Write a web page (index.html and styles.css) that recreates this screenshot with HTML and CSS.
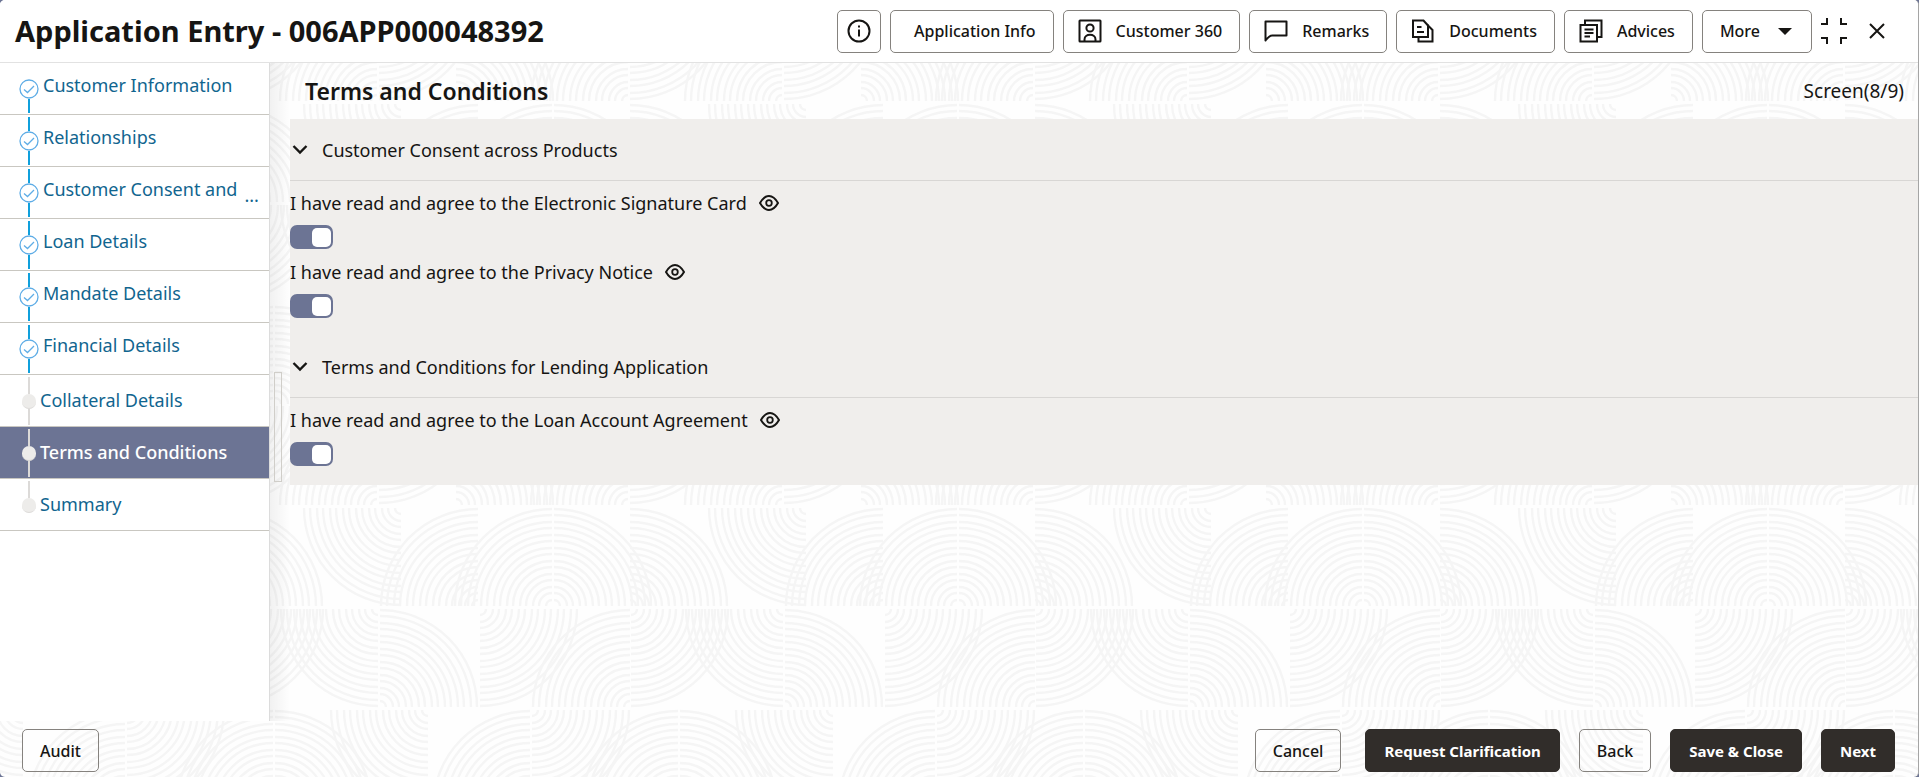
FILE: index.html
```html
<!DOCTYPE html>
<html lang="en">
<head>
  <meta charset="UTF-8" />
  <meta name="viewport" content="width=device-width, initial-scale=1.0" />
  <title>Application Entry</title>
  <link rel="stylesheet" href="styles.css">
</head>
<body>
<div class="window">

  <!-- background pattern: rows of quarter fans -->
  <svg class="backdrop" aria-hidden="true">
    <defs>
      <path id="fan" d="M97 0A97 97 0 0 1 0 97M91 0A91 91 0 0 1 0 91M84 0A84 84 0 0 1 0 84M78 0A78 78 0 0 1 0 78M71 0A71 71 0 0 1 0 71M65 0A65 65 0 0 1 0 65M58 0A58 58 0 0 1 0 58M52 0A52 52 0 0 1 0 52M45 0A45 45 0 0 1 0 45M39 0A39 39 0 0 1 0 39M32 0A32 32 0 0 1 0 32M26 0A26 26 0 0 1 0 26M19 0A19 19 0 0 1 0 19M13 0A13 13 0 0 1 0 13M6 0A6 6 0 0 1 0 6" />
      <pattern id="waves" x="0" y="1" width="405" height="404" patternUnits="userSpaceOnUse">
        <g fill="none" stroke="#f5f5f5" stroke-width="2.4">
          <!-- row 1 -->
          <use href="#fan" transform="translate(377 100) scale(-1 -1)" />
          <use href="#fan" transform="translate(379 1)" />
          <use href="#fan" transform="translate(-26 1)" />
          <use href="#fan" transform="translate(51 100) scale(1 -1)" />
          <use href="#fan" transform="translate(223 100) scale(-1 -1)" />
          <use href="#fan" transform="translate(225 1)" />
          <!-- row 2 -->
          <use href="#fan" transform="translate(401 103) scale(-1 1)" />
          <use href="#fan" transform="translate(73 201) scale(-1 -1)" />
          <use href="#fan" transform="translate(478 201) scale(-1 -1)" />
          <use href="#fan" transform="translate(147 201) scale(-1 -1)" />
          <use href="#fan" transform="translate(149 201) scale(1 -1)" />
          <use href="#fan" transform="translate(225 201) scale(1 -1)" />
          <!-- row 3 -->
          <use href="#fan" transform="translate(378 204) scale(-1 1)" />
          <use href="#fan" transform="translate(226 204)" />
          <use href="#fan" transform="translate(380 302) scale(1 -1)" />
          <use href="#fan" transform="translate(-25 302) scale(1 -1)" />
          <use href="#fan" transform="translate(75 204)" />
          <use href="#fan" transform="translate(225 302) scale(-1 -1)" />
          <!-- row 4 -->
          <use href="#fan" transform="translate(23 305) scale(-1 1)" />
          <use href="#fan" transform="translate(428 305) scale(-1 1)" />
          <use href="#fan" transform="translate(125 403) scale(-1 -1)" />
          <use href="#fan" transform="translate(127 305)" />
          <use href="#fan" transform="translate(273 403) scale(-1 -1)" />
          <use href="#fan" transform="translate(275 403) scale(1 -1)" />
        </g>
      </pattern>
      <symbol id="eye" viewBox="0 0 20 16">
        <path d="M1 8Q5 1 10 1T19 8Q15 15 10 15T1 8Z" fill="none" stroke="currentColor" stroke-width="2" stroke-linejoin="round" />
        <circle cx="10" cy="8" r="2.8" fill="none" stroke="currentColor" stroke-width="1.8" />
      </symbol>
      <symbol id="chevron" viewBox="0 0 16 10">
        <path d="M1.5 1L8 7.5L14.5 1" fill="none" stroke="currentColor" stroke-width="2.4" />
      </symbol>
      <symbol id="done" viewBox="0 0 20 20">
        <circle cx="10" cy="10" r="9" fill="#fff" stroke="#5fade6" stroke-width="1.3" />
        <path d="M5 10.5L8.5 13.5L15 7" fill="none" stroke="#5fade6" stroke-width="1.3" />
      </symbol>
    </defs>
    <rect width="100%" height="100%" fill="url(#waves)" />
  </svg>

  <header class="header">
    <h1>Application Entry - 006APP000048392</h1>
    <div class="toolbar">
      <button class="btn btn-icon" aria-label="Information">
        <svg width="24" height="24" viewBox="0 0 24 24" fill="none" stroke="currentColor" stroke-width="2">
          <circle cx="12" cy="12" r="10.5" />
          <path d="M12 10.5V17.5" />
          <path d="M12 6.5V8.5" />
        </svg>
      </button>
      <button class="btn btn-info">Application Info</button>
      <button class="btn btn-tool">
        <svg width="24" height="24" viewBox="0 0 24 24" fill="none" stroke="currentColor" stroke-width="2">
          <rect x="1.5" y="1.5" width="21" height="21" rx="0.5" />
          <circle cx="12" cy="9" r="3.6" />
          <path d="M6.5 22V20.5C6.5 17.5 9 15.8 12 15.8S17.5 17.5 17.5 20.5V22" />
        </svg>
        Customer 360
      </button>
      <button class="btn btn-tool">
        <svg width="24" height="24" viewBox="0 0 24 24" fill="none" stroke="currentColor" stroke-width="2" stroke-linejoin="round">
          <path d="M1.5 2.5H22.5V16.5H8C5.5 16.5 4 18.5 1.5 21.5Z" />
        </svg>
        Remarks
      </button>
      <button class="btn btn-tool">
        <svg width="24" height="24" viewBox="0 0 24 24" fill="none" stroke="currentColor" stroke-width="2">
          <path d="M2 1.5H12.5L17 6.5V18H2Z" />
          <path d="M16.5 6L21.5 11V22.5H7.5V18" />
          <path d="M6 8H10.5M6 13H13" />
        </svg>
        Documents
      </button>
      <button class="btn btn-tool">
        <svg width="24" height="24" viewBox="0 0 24 24" fill="none" stroke="currentColor" stroke-width="2">
          <path d="M1.5 6H18V22.5H1.5Z" />
          <path d="M6 6V1.5H22.5V18H18" />
          <path d="M5.5 10.5H14.5M5.5 14H14.5M5.5 17.5H11" />
        </svg>
        Advices
      </button>
      <button class="btn btn-more">
        More
        <svg width="14" height="7" viewBox="0 0 14 7"><path d="M0 0H14L7 7Z" fill="currentColor" /></svg>
      </button>
      <button class="btn-plain" aria-label="Exit full screen">
        <svg width="26" height="26" viewBox="0 0 26 26" fill="none" stroke="currentColor" stroke-width="2">
          <path d="M6 0V6H0M20 0V6H26M0 20H6V26M26 20H20V26" />
        </svg>
      </button>
      <button class="btn-plain btn-close" aria-label="Close">
        <svg width="16" height="16" viewBox="0 0 16 16" fill="none" stroke="currentColor" stroke-width="2">
          <path d="M1 1L15 15M15 1L1 15" />
        </svg>
      </button>
    </div>
  </header>

  <div class="main">
    <nav class="sidebar">
      <ol class="steps">
        <li class="step done"><a href="#"><span class="marker"><svg><use href="#done" /></svg></span><span class="label">Customer Information</span></a></li>
        <li class="step done"><a href="#"><span class="marker"><svg><use href="#done" /></svg></span><span class="label">Relationships</span></a></li>
        <li class="step done"><a href="#"><span class="marker"><svg><use href="#done" /></svg></span><span class="label">Customer Consent and</span><span class="more">...</span></a></li>
        <li class="step done"><a href="#"><span class="marker"><svg><use href="#done" /></svg></span><span class="label">Loan Details</span></a></li>
        <li class="step done"><a href="#"><span class="marker"><svg><use href="#done" /></svg></span><span class="label">Mandate Details</span></a></li>
        <li class="step done"><a href="#"><span class="marker"><svg><use href="#done" /></svg></span><span class="label">Financial Details</span></a></li>
        <li class="step"><a href="#"><span class="marker"><i class="dot"></i></span><span class="label">Collateral Details</span></a></li>
        <li class="step active"><a href="#" aria-current="step"><span class="marker"><i class="dot"></i></span><span class="label">Terms and Conditions</span></a></li>
        <li class="step"><a href="#"><span class="marker"><i class="dot"></i></span><span class="label">Summary</span></a></li>
      </ol>
    </nav>
    <div class="gutter"><div class="handle"></div></div>

    <main class="content">
      <div class="content-head">
        <h2>Terms and Conditions</h2>
        <span class="screen-no">Screen(8/9)</span>
      </div>
      <div class="panel">
        <details open>
          <summary><svg class="chevron"><use href="#chevron" /></svg>Customer Consent across Products</summary>
          <div class="consent">
            <div class="consent-text">
              <label for="signature">I have read and agree to the Electronic Signature Card</label>
              <button class="btn-plain" aria-label="View signature card"><svg class="eye"><use href="#eye" /></svg></button>
            </div>
            <input class="switch" type="checkbox" id="signature" checked>
          </div>
          <div class="consent">
            <div class="consent-text">
              <label for="privacy">I have read and agree to the Privacy Notice</label>
              <button class="btn-plain" aria-label="View privacy notice"><svg class="eye"><use href="#eye" /></svg></button>
            </div>
            <input class="switch" type="checkbox" id="privacy" checked>
          </div>
        </details>
        <details open>
          <summary><svg class="chevron"><use href="#chevron" /></svg>Terms and Conditions for Lending Application</summary>
          <div class="consent">
            <div class="consent-text">
              <label for="loan">I have read and agree to the Loan Account Agreement</label>
              <button class="btn-plain" aria-label="View loan agreement"><svg class="eye"><use href="#eye" /></svg></button>
            </div>
            <input class="switch" type="checkbox" id="loan" checked>
          </div>
        </details>
      </div>
    </main>
  </div>

  <footer class="footer">
    <button class="btn">Audit</button>
    <div class="actions">
      <button class="btn btn-cancel">Cancel</button>
      <button class="btn btn-dark">Request Clarification</button>
      <button class="btn">Back</button>
      <button class="btn btn-dark">Save &amp; Close</button>
      <button class="btn btn-dark">Next</button>
    </div>
  </footer>
</div>
</body>
</html>
```
FILE: styles.css
```css
:root {
  --text: #161513;
  --link: #11658f;
  --accent: #6c7494;
  --dark: #312d2a;
  --panel: #f0eeec;
  --line: #c9c7c1;
  --blue: #10a0dc;
}

* {
  box-sizing: border-box;
  margin: 0;
  padding: 0;
}

body {
  background: var(--accent);
  color: var(--text);
  font-family: "Noto Sans", "Open Sans", sans-serif;
  font-size: 18px;
  line-height: 24px;
}

button {
  font-family: inherit;
  color: inherit;
  cursor: pointer;
}

.window {
  position: relative;
  isolation: isolate;
  display: flex;
  flex-direction: column;
  min-height: 100vh;
  background: #fefefe;
  border-right: 1px solid #a5a5a5;
  border-radius: 5px;
  overflow: hidden;
}

.backdrop {
  position: absolute;
  inset: 0;
  width: 100%;
  height: 100%;
  z-index: -1;
}

/* header */
.header {
  display: flex;
  align-items: center;
  justify-content: space-between;
  height: 63px;
  padding: 0 33px 0 15px;
  background: #fff;
  border-bottom: 1px solid #e2e2e2;
}

.header h1 {
  font-size: 29px;
  font-weight: 700;
  line-height: 40px;
}

.toolbar {
  display: flex;
  align-items: center;
  gap: 9px;
}

.btn {
  display: flex;
  align-items: center;
  height: 43px;
  padding: 0 17px;
  background: transparent;
  border: 1px solid #85827e;
  border-radius: 5px;
  font-size: 16px;
  font-weight: 500;
  white-space: nowrap;
}

.btn-icon {
  padding: 0 9px;
}

.btn-info {
  padding: 0 17px 0 23px;
}

.btn-tool {
  gap: 14px;
  padding: 0 17px 0 14px;
}

.btn-more {
  gap: 18px;
  padding: 0 19px 0 17px;
}

.btn-plain {
  display: flex;
  background: none;
  border: none;
}

.btn-close {
  margin-left: 13px;
}

/* left steps */
.main {
  display: flex;
  flex: 1;
}

.sidebar {
  flex: 0 0 270px;
  background: #fff;
  border-right: 1px solid #dcdcdc;
}

.steps {
  list-style: none;
}

.step a {
  display: flex;
  align-items: center;
  height: 52px;
  padding-left: 19px;
  border-bottom: 1px solid var(--line);
  color: var(--link);
  text-decoration: none;
  white-space: nowrap;
}

.marker {
  display: flex;
  flex-direction: column;
  align-items: center;
  align-self: stretch;
  width: 20px;
  margin-right: 1px;
  padding: 2px 0 1px;
}

.marker::before,
.marker::after {
  content: "";
  flex: 1;
  width: 2px;
  background: #dcdad8;
}

.marker svg {
  display: block;
  width: 20px;
  height: 20px;
}

.done .marker {
  margin-right: 4px;
}

.done .marker::before,
.done .marker::after {
  background: var(--blue);
}

.step:first-child .marker::before,
.step:last-child .marker::after {
  visibility: hidden;
}

.dot {
  width: 14px;
  height: 15px;
  border-radius: 7px;
  background: #edecea;
  border-bottom: 1px solid #dcdad8;
}

.label {
  padding-bottom: 2px;
}

.done .label {
  padding-bottom: 8px;
}

.more {
  align-self: flex-end;
  margin-left: 7px;
  padding-bottom: 11px;
}

.active a {
  background: var(--accent);
  color: #fff;
  font-weight: 500;
}

.gutter {
  flex: 0 0 20px;
  padding: 309px 0 0 4px;
  background: linear-gradient(to right, rgba(0, 0, 0, 0.05), transparent);
}

.handle {
  width: 8px;
  height: 110px;
  border: 1px solid #d0cec9;
}

/* content */
.content {
  flex: 1;
  min-width: 0;
}

.content-head {
  display: flex;
  align-items: center;
  justify-content: space-between;
  height: 56px;
  padding: 0 14px 0 15px;
}

.content-head h2 {
  font-size: 23px;
  font-weight: 600;
  line-height: 32px;
}

.screen-no {
  font-size: 19px;
}

.panel {
  background: var(--panel);
  padding-bottom: 1px;
}

details {
  padding-bottom: 17px;
}

summary {
  display: flex;
  align-items: center;
  gap: 14px;
  height: 62px;
  padding-left: 2px;
  border-bottom: 1px solid #d8d6d4;
  cursor: pointer;
}

.chevron {
  width: 16px;
  height: 10px;
}

.consent {
  padding-bottom: 1px;
}

.consent-text {
  display: flex;
  align-items: center;
  gap: 12px;
  height: 44px;
}

.eye {
  width: 20px;
  height: 16px;
}

.switch {
  display: flex;
  justify-content: flex-start;
  align-items: center;
  width: 43px;
  height: 24px;
  padding: 2px;
  appearance: none;
  background: #a8a6a4;
  border-radius: 7px;
  cursor: pointer;
}

.switch::before {
  content: "";
  width: 19px;
  height: 19px;
  border-radius: 5px;
  background: #fff;
}

.switch:checked {
  justify-content: flex-end;
  background: var(--accent);
}

/* footer */
.footer {
  display: flex;
  align-items: center;
  justify-content: space-between;
  padding: 8px 23px 5px 22px;
}

.actions {
  display: flex;
  gap: 19px;
}

.btn-cancel {
  margin-right: 5px;
}

.btn-dark {
  padding: 0 18px;
  background: var(--dark);
  border-color: var(--dark);
  color: #fff;
  font-size: 15px;
  font-weight: 700;
}
```
